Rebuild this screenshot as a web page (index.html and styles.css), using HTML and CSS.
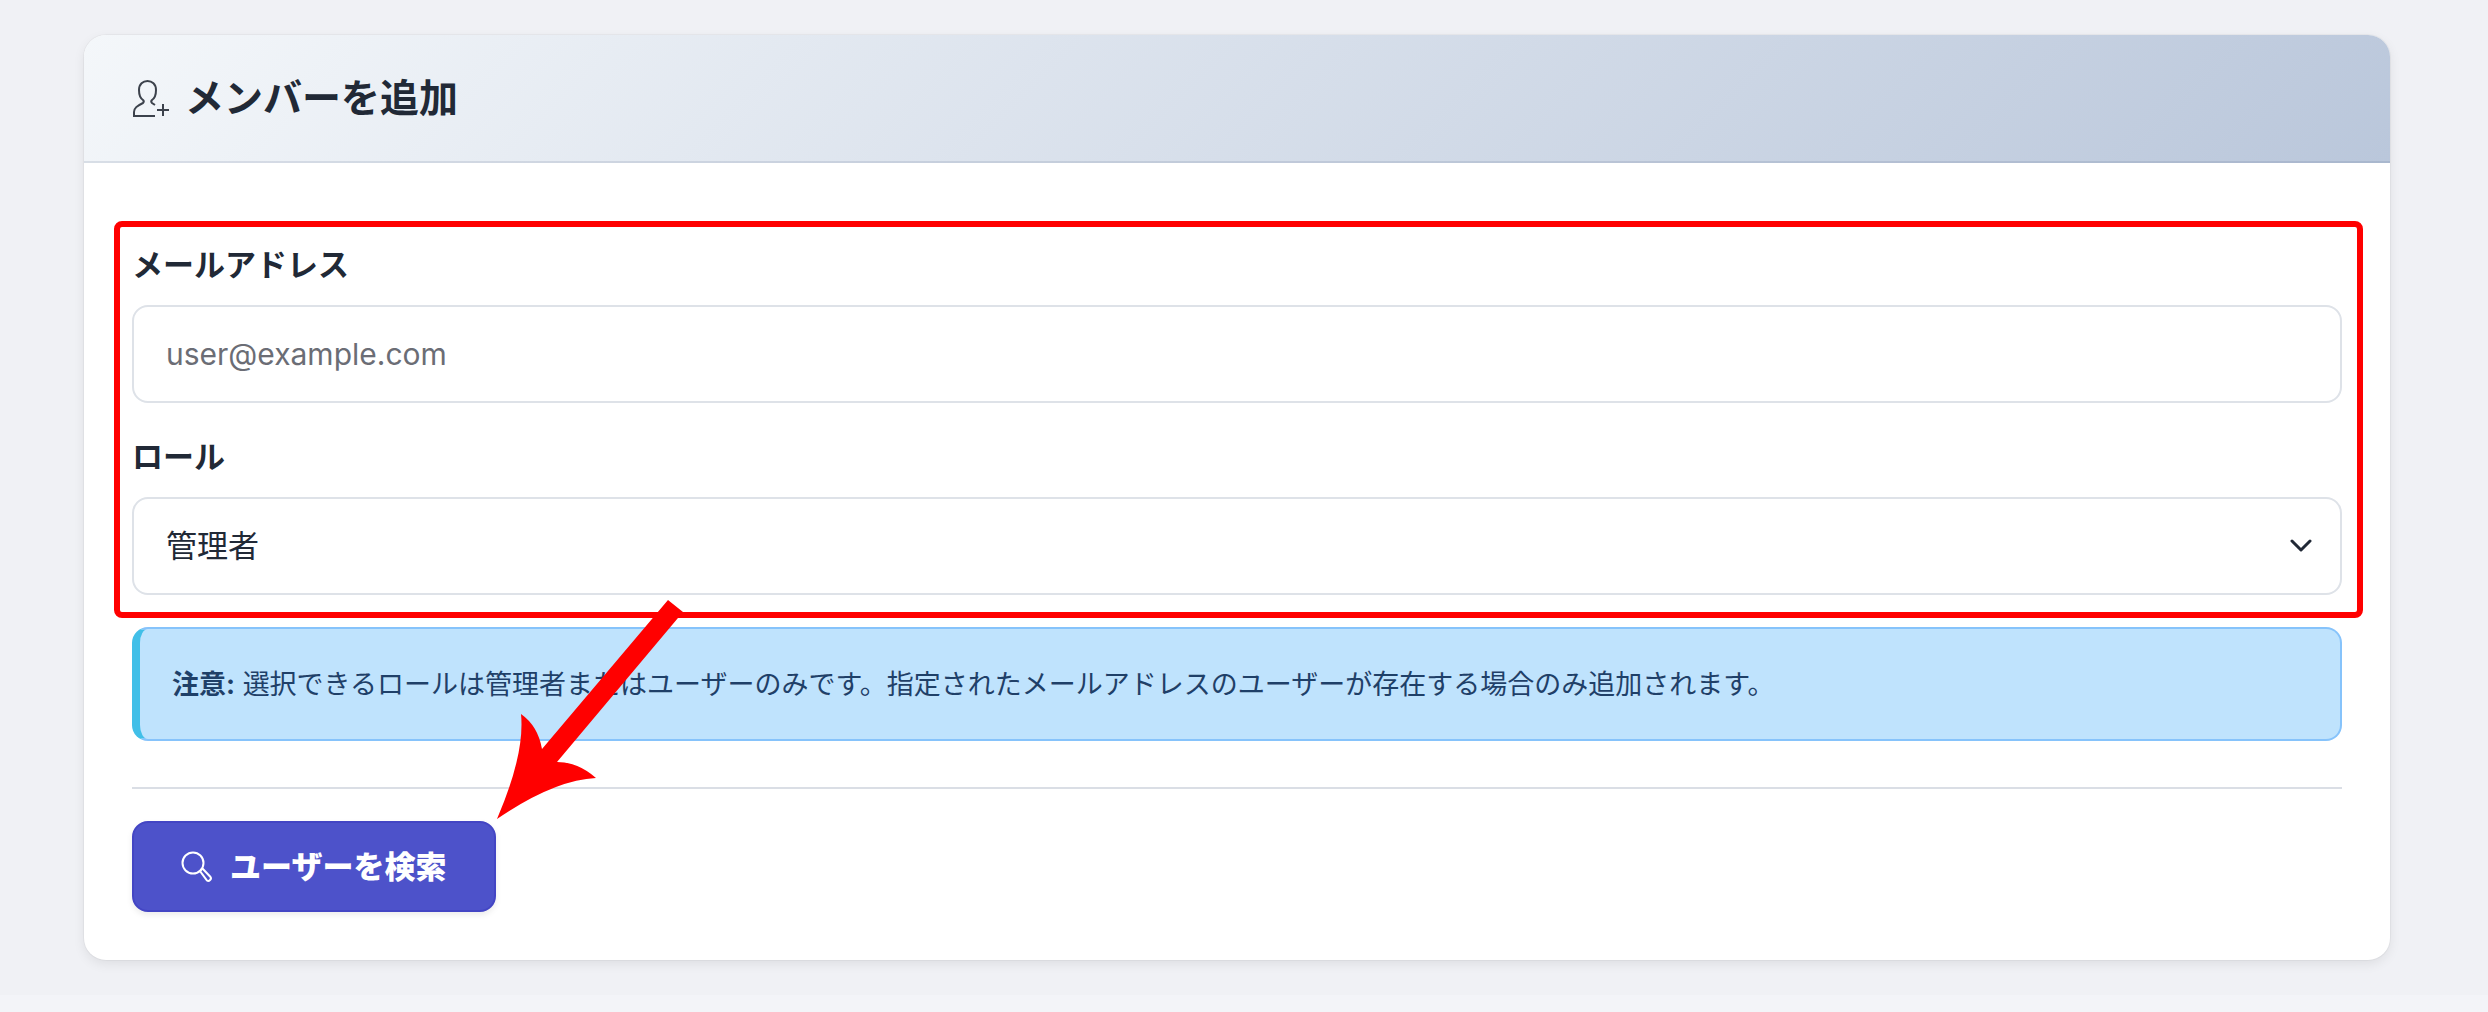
FILE: index.html
```html
<!DOCTYPE html>
<html lang="ja">
<head>
    <meta charset="UTF-8">
    <meta name="viewport" content="width=device-width, initial-scale=1.0">
    <title>メンバーを追加</title>
    <link rel="stylesheet" href="styles.css">
</head>
<body>
    <main class="page">
        <section class="card">
            <header class="card-header">
                <svg class="icon" viewBox="0 0 38 40" width="38" height="40" aria-hidden="true">
                    <path d="M23 38H2v-4c0-4 3-6 9-9 1-1 1-2 0-3C8 20 7 16 7 12 7 6 11 3 15.500 3S24 6 24 12c0 4-1 8-4 10-1 1-1 2 0 3l3 2"/>
                    <path d="M31 26v12M25 32h12"/>
                </svg>
                <h1>メンバーを追加</h1>
            </header>
            <form class="card-body">
                <div class="fields">
                    <div class="field">
                        <label for="email">メールアドレス</label>
                        <input type="email" id="email" placeholder="user@example.com">
                    </div>
                    <div class="field">
                        <label for="role">ロール</label>
                        <div class="select-wrap">
                            <select id="role">
                                <option>管理者</option>
                                <option>ユーザー</option>
                            </select>
                            <svg class="chevron" viewBox="0 0 22 14" width="22" height="14" aria-hidden="true">
                                <path d="M2 2l9 9 9-9"/>
                            </svg>
                        </div>
                    </div>
                </div>
                <div class="alert">
                    <strong>注意:</strong> 選択できるロールは管理者またはユーザーのみです。指定されたメールアドレスのユーザーが存在する場合のみ追加されます。
                </div>
                <hr>
                <div class="actions">
                    <button type="button" class="btn">
                        <svg class="icon" viewBox="0 0 32 32" width="32" height="32" aria-hidden="true">
                            <circle cx="12" cy="12" r="10.500"/>
                            <path d="M19 20l2.500-2.500 8 8.500c1.500 2-1.500 5-3.500 3.500z"/>
                        </svg>
                        <span>ユーザーを検索</span>
                    </button>
                    <svg class="arrow" viewBox="0 0 186 220" width="186" height="220" aria-hidden="true">
                        <path d="M171 1l15 12L60 163q21 0 39 16Q57 181 0 220 28 155 24 115q17 12 21 35z"/>
                    </svg>
                </div>
            </form>
        </section>
    </main>
</body>
</html>
```

FILE: styles.css
```css
* {
    box-sizing: border-box;
}
body {
    margin: 0;
    background: #f3f4f8;
    color: #212936;
    font-family: Inter, "Noto Sans CJK JP", sans-serif;
    font-size: 31px;
    line-height: 48px;
}
.page {
    padding: 35px 98px 35px 84px;
    background: #f0f1f5;
}
.card {
    background: #fff;
    border-radius: 22px;
    box-shadow: 0 0 0 1px rgba(0, 0, 0, 0.03), 0 4px 12px rgba(0, 0, 0, 0.08);
}
.card-header {
    display: flex;
    align-items: center;
    gap: 15px;
    padding: 38px 48px;
    border-bottom: 2px solid rgba(60, 80, 120, 0.15);
    border-radius: 22px 22px 0 0;
    background: linear-gradient(135deg, #f4f7fa 0%, #bac7db 100%);
}
h1 {
    margin: 0;
    font-size: 39px;
    line-height: 50px;
    font-weight: 700;
}
.icon {
    flex: none;
    fill: none;
    stroke: currentColor;
    stroke-width: 2;
}
.card-header .icon {
    stroke: #3c424c;
}
.card-body {
    padding: 78px 48px 48px;
}
.fields {
    position: relative;
    display: flex;
    flex-direction: column;
    gap: 30px;
}
/* red frame round the two fields */
.fields::after {
    content: "";
    position: absolute;
    inset: -20px -21px -23px -18px;
    border: 6px solid #f00;
    border-radius: 8px;
    pointer-events: none;
}
.field {
    display: flex;
    flex-direction: column;
    gap: 16px;
}
label {
    font-weight: 700;
}
input,
select {
    width: 100%;
    height: 98px;
    padding: 0 32px;
    border: 2px solid #dee2e8;
    border-radius: 16px;
    background: #fff;
    color: inherit;
    font: inherit;
    appearance: none;
}
input {
    font-size: 30px;
}
input::placeholder {
    color: #6b6d75;
    opacity: 1;
}
.select-wrap {
    position: relative;
}
.chevron {
    position: absolute;
    right: 30px;
    top: 42px;
    fill: none;
    stroke: #212936;
    stroke-width: 3;
    stroke-linecap: round;
    stroke-linejoin: round;
}
.alert {
    margin-top: 32px;
    padding: 32px 32px 30px;
    border: 2px solid #86c3fb;
    border-left: 8px solid #41bfe8;
    border-radius: 16px;
    background: #bfe3fd;
    color: #1f4068;
    font-size: 27px;
}
hr {
    margin: 46px 0 32px;
    border: 0;
    border-top: 2px solid #dadee5;
}
.actions {
    position: relative;
    display: flex;
}
.btn {
    display: flex;
    align-items: center;
    gap: 17px;
    height: 91px;
    padding: 0 48px 0 47px;
    border: 2px solid #4345c4;
    border-radius: 16px;
    background: #4d52ca;
    box-shadow: 0 3px 6px rgba(0, 0, 0, 0.08);
    color: #fff;
    font: inherit;
    font-weight: 900;
}
.arrow {
    position: absolute;
    left: 365px;
    bottom: 93px;
    fill: #f00;
}
```
